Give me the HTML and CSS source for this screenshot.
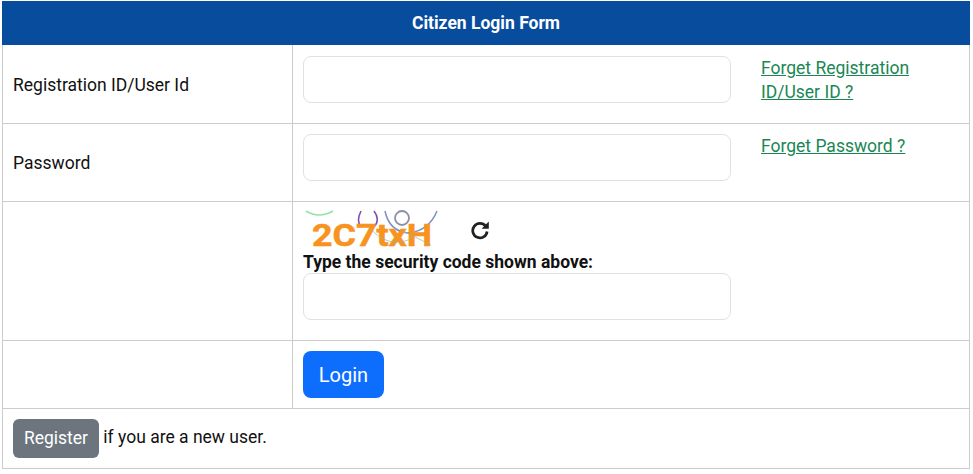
FILE: index.html
```html
<!DOCTYPE html>
<html lang="en">
<head>
<meta charset="utf-8">
<title>Citizen Login Form</title>
<link rel="stylesheet" href="styles.css">
</head>
<body>
<table class="login-table">
  <tr><th colspan="2" class="title">Citizen Login Form</th></tr>
  <tr class="row-user">
    <td class="label">Registration ID/User Id</td>
    <td class="field">
      <div class="field-row">
        <input class="input" type="text" aria-label="Registration ID/User Id">
        <a class="link" href="#">Forget Registration ID/User ID ?</a>
      </div>
    </td>
  </tr>
  <tr class="row-pass">
    <td class="label">Password</td>
    <td class="field">
      <div class="field-row">
        <input class="input" type="password" aria-label="Password">
        <a class="link" href="#">Forget Password ?</a>
      </div>
    </td>
  </tr>
  <tr class="row-code">
    <td></td>
    <td class="field">
      <div class="captcha-row">
        <svg class="captcha" width="140" height="37" viewBox="0 0 140 37">
          <path d="M3 0Q16 8 30 0" fill="none" stroke="#8fe3a8" stroke-width="1.5"/>
          <path d="M58 0Q53 10 58 16M71 0Q77 8 72 15" fill="none" stroke="#7e4fb0" stroke-width="1.6"/>
          <path d="M82 0Q86 20 105 22Q126 20 134 0" fill="none" stroke="#7d8fc4" stroke-width="1.5"/>
          <circle cx="99" cy="7" r="7" fill="none" stroke="#8d8fa8" stroke-width="1.8"/>
          <text class="captcha-text" x="9" y="35" textLength="120" lengthAdjust="spacingAndGlyphs">2C7txH</text>
          <path d="M66 16Q84 38 108 28M100 20L128 34" fill="none" stroke="#9bb58a" stroke-width="1" opacity=".7"/>
        </svg>
        <svg class="refresh" width="20" height="20" viewBox="0 0 20 20" aria-label="Refresh">
          <path d="M15.6 6.2A7.2 7.2 0 1 0 17.1 11.5" fill="none" stroke="#222" stroke-width="2.7"/>
          <path d="M18.8 1.6V8.8H11.6Z" fill="#222"/>
        </svg>
      </div>
      <label class="code-label">Type the security code shown above:</label>
      <input class="input input-code" type="text" aria-label="Security code">
    </td>
  </tr>
  <tr>
    <td></td>
    <td class="field"><button class="btn-login" type="button">Login</button></td>
  </tr>
  <tr>
    <td colspan="2" class="register-cell"><a class="btn-register" href="#">Register</a> if you are a new user.</td>
  </tr>
</table>
</body>
</html>
```
FILE: styles.css
```css
* { box-sizing: border-box; }
html, body { margin: 0; background: #fff; }
body {
  padding: 0 3px 0 2px;
  font-family: Roboto, "Liberation Sans", sans-serif;
  font-size: 17.5px;
  line-height: 24px;
  color: #111;
}
.login-table {
  width: 100%;
  border-collapse: collapse;
  margin-top: 1px;
}
.login-table td, .login-table th {
  border: 1px solid #ccc;
  padding: 10px;
}
.login-table .title {
  background: #084c9e;
  color: #fff;
  font-size: 17.5px;
  font-weight: 700;
  text-align: center;
  padding: 9px 10px;
  border-color: #084c9e;
}
.label { width: 290px; vertical-align: middle; }
.row-user td { height: 79px; }
.login-table .row-user .field { padding-top: 11px; }
.login-table .row-user .label { padding-top: 12px; }
.row-pass td { height: 78px; }
.login-table .row-code .field { padding-top: 9px; }
.field { vertical-align: top; }
.field-row { display: flex; gap: 30px; align-items: flex-start; }
.input {
  display: block;
  flex: none;
  width: 428px;
  height: 47px;
  background: #fff;
  border: 1px solid #dee2e6;
  border-radius: 8px;
}
.input-code { margin-bottom: 10px; }
.link {
  width: 175px;
  font-size: 17.5px;
  color: #198754;
  text-decoration: underline;
}
.captcha-row { display: flex; align-items: center; height: 37px; }
.captcha { display: block; flex: none; overflow: visible; }
.captcha-text {
  font-family: Roboto, "Liberation Sans", sans-serif;
  font-size: 32px;
  font-weight: 700;
  fill: #f7931e;
  stroke: #f7931e;
  stroke-width: 0.5px;
}
.refresh { margin-left: 27px; flex: none; }
.code-label { display: block; font-weight: 700; height: 25px; line-height: 28px; }
.btn-login {
  display: block;
  width: 81px;
  height: 47px;
  padding: 0;
  font: 20px/1.5 Roboto, "Liberation Sans", sans-serif;
  color: #fff;
  background: #0d6efd;
  border: 0;
  border-radius: 8px;
}
.register-cell { height: 60px; vertical-align: top; }
.login-table .register-cell { padding-top: 10px; }
.btn-register {
  display: inline-block;
  width: 86px;
  height: 39px;
  line-height: 39px;
  text-align: center;
  font-size: 17.5px;
  color: #fff;
  background: #6c757d;
  border-radius: 6px;
  text-decoration: none;
  vertical-align: middle;
}
```
